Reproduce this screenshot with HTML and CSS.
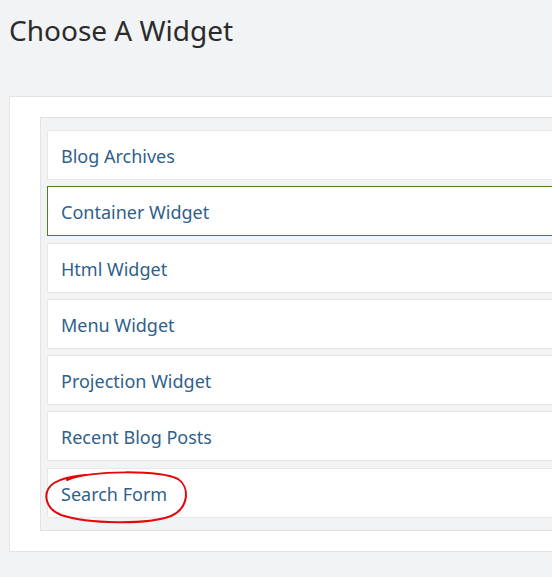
FILE: index.html
```html
<!DOCTYPE html>
<html>
<head>
<meta charset="utf-8">
<link rel="stylesheet" href="styles.css">
</head>
<body>
<h1 class="title">Choose A Widget</h1>
<div class="panel">
  <div class="list">
    <div class="item">Blog Archives</div>
    <div class="item selected">Container Widget</div>
    <div class="item">Html Widget</div>
    <div class="item">Menu Widget</div>
    <div class="item">Projection Widget</div>
    <div class="item">Recent Blog Posts</div>
    <div class="item marked">Search Form
      <svg class="circle" width="146" height="54" viewBox="0 0 146 54">
        <path d="M 24 10 C 50 0, 116 0, 135 9 C 147 17, 146 38, 128 46 C 104 55, 45 54, 18 45 C 1 38, -1 21, 11 13 C 19 8, 31 6, 42 5" fill="none" stroke="#e4080a" stroke-width="2" stroke-linecap="round"/>
      </svg>
    </div>
  </div>
</div>
</body>
</html>
```

FILE: styles.css
```css
html, body {
  margin: 0;
  padding: 0;
  background: #f2f3f5;
  overflow: hidden;
  font-family: "Noto Sans", "Open Sans", sans-serif;
}
.title {
  margin: 0;
  padding: 11px 0 0 9px;
  font-size: 28px;
  font-weight: 400;
  line-height: 38px;
  color: #2b2b2b;
}
.panel {
  margin: 47px 0 0 9px;
  width: 600px;
  background: #fff;
  border: 1px solid #e2e3e5;
  padding: 20px 0 20px 30px;
}
.list {
  background: #f2f3f5;
  border: 1px solid #e2e3e5;
  padding: 12px 6px 12px 6px;
  display: flex;
  flex-direction: column;
  gap: 6.3px;
}
.item {
  position: relative;
  height: 48px;
  line-height: 50px;
  background: #fff;
  border: 1px solid #e6e7e9;
  padding-left: 13px;
  font-size: 18px;
  color: #2f5f8b;
}
.item.selected {
  border-color: #4f7d2b;
}
.circle {
  position: absolute;
  left: -5px;
  top: 1px;
  overflow: visible;
}
```
